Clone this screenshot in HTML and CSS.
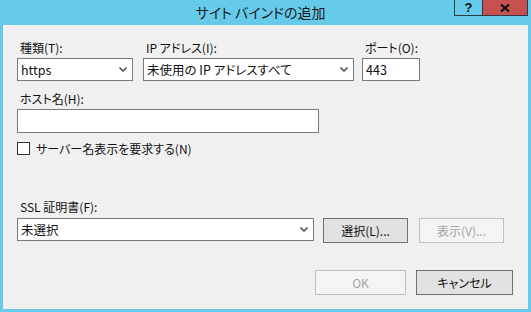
FILE: index.html
```
<!DOCTYPE html>
<html lang="ja">
<head>
    <meta charset="UTF-8">
    <title>サイト バインドの追加</title>
    <link rel="stylesheet" href="styles.css">
</head>
<body>
    <div class="window">
        <div class="titlebar">
            <span class="title">サイト バインドの追加</span>
            <div class="caption-btns">
                <span class="cap help">?</span>
                <span class="cap close">
                    <svg width="10" height="8" viewBox="0 0 10 8"><path d="M1 0.5 L9 7.5 M9 0.5 L1 7.5" stroke="#111" stroke-width="2.2" fill="none"/></svg>
                </span>
            </div>
        </div>
        <div class="client">
            <div class="top-row">
                <div class="field f-type">
                    <label>種類(T):</label>
                    <div class="combo"><span>https</span>
                        <svg class="chev" width="8" height="5" viewBox="0 0 8 5"><path d="M0.5 0.5 L4 4 L7.5 0.5" stroke="#555" stroke-width="1.6" fill="none"/></svg>
                    </div>
                </div>
                <div class="field f-ip">
                    <label>IP アドレス(I):</label>
                    <div class="combo"><span>未使用の IP アドレスすべて</span>
                        <svg class="chev" width="8" height="5" viewBox="0 0 8 5"><path d="M0.5 0.5 L4 4 L7.5 0.5" stroke="#555" stroke-width="1.6" fill="none"/></svg>
                    </div>
                </div>
                <div class="field f-port">
                    <label>ポート(O):</label>
                    <input class="textbox" type="text" value="443">
                </div>
            </div>

            <div class="field f-host">
                <label>ホスト名(H):</label>
                <input class="textbox" type="text" value="">
            </div>

            <div class="check-row">
                <span class="check"></span>
                <span>サーバー名表示を要求する(N)</span>
            </div>

            <div class="field f-ssl">
                <label>SSL 証明書(F):</label>
                <div class="ssl-row">
                    <div class="combo ssl-combo"><span>未選択</span>
                        <svg class="chev" width="8" height="5" viewBox="0 0 8 5"><path d="M0.5 0.5 L4 4 L7.5 0.5" stroke="#555" stroke-width="1.6" fill="none"/></svg>
                    </div>
                    <button class="btn btn-select">選択(L)...</button>
                    <button class="btn btn-view" disabled>表示(V)...</button>
                </div>
            </div>

            <div class="footer">
                <button class="btn btn-ok" disabled>OK</button>
                <button class="btn btn-cancel">キャンセル</button>
            </div>
        </div>
    </div>
</body>
</html>
```
FILE: styles.css
```
body{
    margin: 0;
    background: #66cbea;
    font-family: "Noto Sans CJK JP", "Noto Sans", sans-serif;
    font-size: 12px;
    color: #111;
    font-feature-settings: "palt";
}
.window{
    width: 531px;
    height: 312px;
    background: #66cbea;
    display: flex;
    flex-direction: column;
    position: relative;
}
.titlebar{
    height: 25px;
    display: flex;
    justify-content: center;
    align-items: center;
}
.title{
    font-size: 14px;
    line-height: 25px;
    margin-left: -10px;
    color: #1a1a1a;
}
.caption-btns{
    position: absolute;
    top: 0;
    right: 3px;
    display: flex;
}
.cap{
    height: 15px;
    border: 1px solid #2e3a44;
    border-top: none;
    display: flex;
    align-items: center;
    justify-content: center;
    font-weight: bold;
    font-family: "Liberation Sans", sans-serif;
    font-size: 13px;
}
.help{
    width: 27px;
    border-right: none;
}
.close{
    width: 44px;
    background: #c75050;
}
.client{
    flex: 1;
    margin: 0 3px 3px 3px;
    background: #f0f0f0;
    padding: 14px 15px 0 14px;
}
.field label{
    display: block;
    height: 18px;
    line-height: 18px;
    padding-left: 3px;
    margin-bottom: 1px;
}
.top-row{
    display: flex;
}
.f-type{
    width: 116px;
}
.f-ip{
    width: 211px;
    margin-left: 10px;
}
.f-port{
    width: 58px;
    margin-left: 8px;
}
.combo{
    height: 21px;
    border: 1px solid #7a7a7a;
    background: #fff;
    display: flex;
    align-items: center;
    justify-content: space-between;
    padding: 0 5px 0 3px;
    line-height: 21px;
    font-size: 12.5px;
}
.chev{
    flex: none;
}
.textbox{
    display: block;
    box-sizing: border-box;
    width: 100%;
    height: 23px;
    border: 1px solid #7a7a7a;
    background: #fff;
    margin: 0;
    padding: 0 3px;
    font-family: inherit;
    font-size: 12.5px;
    color: #111;
    outline: none;
}
.f-host{
    margin-top: 9px;
    width: 302px;
}
.f-host .textbox{
    height: 24px;
}
.check-row{
    margin-top: 9px;
    height: 13px;
    display: flex;
    align-items: center;
    line-height: 13px;
}
.check{
    width: 11px;
    height: 11px;
    border: 1px solid #333;
    background: #fff;
    margin-right: 6px;
}
.f-ssl{
    margin-top: 43px;
}
.f-ssl label{
    margin-bottom: 2px;
}
.ssl-row{
    display: flex;
    align-items: flex-start;
}
.ssl-combo{
    width: 287px;
}
.btn{
    box-sizing: border-box;
    height: 25px;
    border: 1px solid #707070;
    background: #e1e1e1;
    font-family: inherit;
    font-size: 12px;
    color: #111;
    padding: 0;
    margin: 0;
    font-feature-settings: "palt";
}
.btn:disabled{
    border-color: #bfbfbf;
    background: #f4f4f4;
    color: #a3a3a3;
}
.btn-select{
    width: 85px;
    margin-left: 9px;
}
.btn-view{
    width: 85px;
    margin-left: 11px;
}
.footer{
    margin-top: 27px;
    display: flex;
    justify-content: flex-end;
}
.btn-ok{
    width: 91px;
}
.btn-cancel{
    width: 97px;
    margin-left: 10px;
}
```
